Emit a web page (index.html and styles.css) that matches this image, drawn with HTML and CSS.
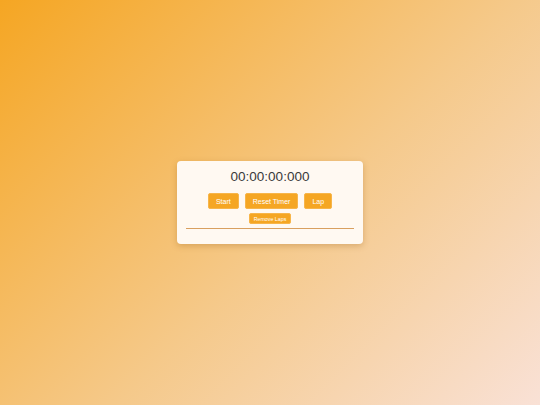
FILE: index.html
```html
<!DOCTYPE html>
<html>
<head>
<meta charset="utf-8">
<link rel="stylesheet" href="styles.css">
</head>
<body>
<div class="page">
  <div class="card">
    <div class="time">00:00:00:000</div>
    <div class="controls">
      <button class="btn">Start</button>
      <button class="btn">Reset Timer</button>
      <button class="btn">Lap</button>
    </div>
    <div class="controls small-row">
      <button class="btn small">Remove Laps</button>
    </div>
    <div class="laps"></div>
  </div>
</div>
</body>
</html>
```
FILE: styles.css
```css
html, body {
  margin: 0;
  padding: 0;
  height: 100%;
}
body {
  background: linear-gradient(135deg, #f5a623 0%, #f5c98a 55%, #f9e1d6 100%);
  font-family: "Liberation Sans", Arial, sans-serif;
}
.page {
  height: 405px;
  display: flex;
  align-items: center;
  justify-content: center;
}
.card {
  width: 168px;
  padding: 4px 9px 15px;
  background: #fff9f2;
  border-radius: 4px;
  box-shadow: 0 2px 6px rgba(150, 90, 20, 0.3);
  display: flex;
  flex-direction: column;
  align-items: center;
}
.time {
  font-size: 13.5px;
  color: #3a3a3a;
  line-height: 24px;
  margin-bottom: 4px;
}
.controls {
  display: flex;
  gap: 6px;
  justify-content: center;
}
.btn {
  background: #f5a623;
  color: #fff;
  border: 1px solid #f7b54a;
  border-radius: 2px;
  font-family: "Liberation Sans", Arial, sans-serif;
  font-size: 7px;
  height: 16px;
  padding: 0 7px;
  margin: 0;
  cursor: pointer;
}
.small-row {
  margin-top: 4px;
}
.btn.small {
  font-size: 5.3px;
  height: 10.5px;
  padding: 0 3.5px;
}
.laps {
  width: 100%;
  margin-top: 4px;
  border-top: 1px solid #d9a060;
}
```
